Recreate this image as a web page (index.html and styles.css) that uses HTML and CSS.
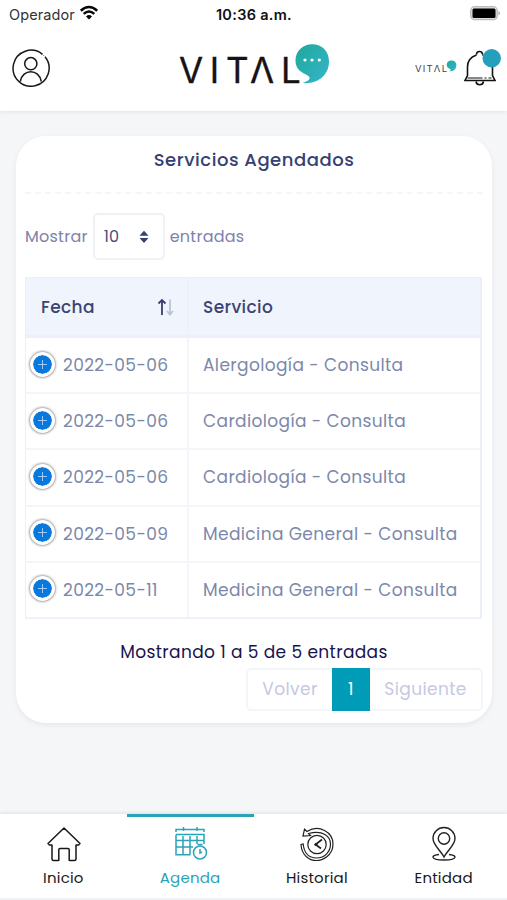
FILE: index.html
```html
<!DOCTYPE html>
<html lang="es">
<head>
<meta charset="utf-8">
<meta name="viewport" content="width=device-width, initial-scale=1">
<title>Servicios Agendados</title>
<link rel="stylesheet" href="styles.css">
</head>
<body>
<div class="app">
  <header class="top">
    <div class="status">
      <div class="carrier"><span class="operator">Operador</span>
        <svg width="20" height="16" viewBox="0 0 20 16" fill="none" stroke="#080808" stroke-width="2.6"><path d="M1.8 5.8Q10-1.8 18.2 5.8M4.7 8.9Q10 4.1 15.3 8.9"/><path d="M7 11.4Q10 8.8 13 11.4L10 14.4Z" fill="#080808" stroke="none"/></svg>
      </div>
      <span class="clock">10:36 a.m.</span>
      <svg class="battery" width="31" height="15" viewBox="0 0 31 15"><rect x=".7" y=".7" width="26.6" height="13" rx="4" fill="#ddd" stroke="#bbb" stroke-width="1.3"/><rect x="2.500" y="2.500" width="23" height="9.500" rx="1.500"/><path d="M28.5 5q3 2.200 0 4.500z" fill="#aaa"/></svg>
    </div>
    <div class="brandbar">
      <svg class="user" width="38" height="38" viewBox="0 0 38 38" fill="none" stroke="#181818" stroke-width="1.5"><path d="M30.5 5.3A18 18 0 1 0 33 7.8M31.5 6.2l.3.3"/><circle cx="18.800" cy="14.700" r="6.100"/><path d="M8.300 32.500C10.500 19.500 27 19.500 29.300 32.500"/></svg>
      <svg class="logo" width="152" height="54" viewBox="0 0 152 54">
        <defs><linearGradient id="teal" x1="0" y1="0" x2="1" y2="1"><stop offset="0" stop-color="#20a89a"/><stop offset="1" stop-color="#35b5cc"/></linearGradient></defs>
        <g class="logo-type"><text x="0" y="39.500">V</text><text x="30.700" y="39.500">I</text><text x="47" y="39.500">T</text><text x="71" y="39.500">Λ</text><text x="102" y="39.500">L</text></g>
        <path d="M133.300 1.300C123.500 1.300 116.500 8.500 116.500 17.500c0 7 4 11 9.500 13.500 7.500 3.200 5.500 6.500-2.500 9C139 41.500 150 32 150 18.500 150 8.500 143 1.300 133.300 1.300Z" fill="url(#teal)"/>
        <g fill="#fff"><circle cx="126" cy="17" r="1.600"/><circle cx="133" cy="17" r="1.600"/><circle cx="140.300" cy="17" r="1.600"/></g>
      </svg>
      <div class="tools">
        <svg width="42" height="16" viewBox="0 0 42 16"><text x="0" y="12" class="mini" textLength="32">VITΛL</text><path d="M36.500 .5c-3 0-4.800 1.900-4.800 4.300 0 2.200 1.600 3.500 3 4 1.600.6 1.300 1.700-.5 2.400 4.400.8 7.200-2.200 7.200-6.100 0-2.700-2-4.600-4.900-4.600Z" fill="url(#teal)"/></svg>
        <svg class="bell" width="38" height="37" viewBox="0 0 38 37" fill="none" stroke="#111" stroke-width="1.600"><path d="M13.500 5.500a3 3 0 0 1 6 0M13.500 6C7.500 8 4.500 12 4.500 18v8.500L2 31.500h30l-2.500-5V18C29.500 12 25.500 8 19.500 6"/><path d="M4.500 29h15m2 0h2m2 0h3" stroke-width="1"/><path d="M13 32.500a3.800 3.800 0 0 0 7.500 0"/><circle cx="28.700" cy="9.200" r="9.200" fill="#259fba" stroke="none"/></svg>
      </div>
    </div>
  </header>

  <main class="content">
    <section class="card">
      <h1>Servicios Agendados</h1>
      <div class="length"><span>Mostrar</span>
        <div class="select"><span>10</span><svg width="12" height="14" viewBox="0 0 10 14" fill="#36406f"><path d="M5 .8 9.500 5.800h-9zM.5 8h9L5 13z"/></svg></div>
        <span>entradas</span></div>
      <table>
        <thead><tr><th class="date"><div class="sort"><span>Fecha</span><svg width="18" height="18" viewBox="0 0 18 18" fill="none" stroke-width="1.800"><path d="M5 17V2M1.500 5.500 5 2l3.500 3.500" stroke="#36406f"/><path d="M13 1.500v15M10 13l3 3.500 3-3.500" stroke="#bdc2d2"/></svg></div></th><th>Servicio</th></tr></thead>
        <tbody>
          <tr><td class="when"><div><i class="plus"></i><span>2022-05-06</span></div></td><td>Alergología - Consulta</td></tr>
          <tr><td class="when"><div><i class="plus"></i><span>2022-05-06</span></div></td><td>Cardiología - Consulta</td></tr>
          <tr><td class="when"><div><i class="plus"></i><span>2022-05-06</span></div></td><td>Cardiología - Consulta</td></tr>
          <tr><td class="when"><div><i class="plus"></i><span>2022-05-09</span></div></td><td>Medicina General - Consulta</td></tr>
          <tr><td class="when"><div><i class="plus"></i><span>2022-05-11</span></div></td><td>Medicina General - Consulta</td></tr>
        </tbody>
      </table>
      <p class="info">Mostrando 1 a 5 de 5 entradas</p>
      <div class="pager"><span class="prev">Volver</span><span class="current">1</span><span class="next">Siguiente</span></div>
    </section>
  </main>

  <nav class="tabs">
    <a><svg width="36" height="36" viewBox="0 0 36 36" fill="none" stroke="#181818" stroke-width="1.500" stroke-linejoin="round"><path d="M18 2 2 17.500l1.500 1.500H6v14q0 1.500 1.500 1.500h5.300V23.700q0-1.200 1.200-1.200h8q1.200 0 1.200 1.200v10.800h5.300q1.500 0 1.500-1.500V19h2.500l1.500-1.500Z"/></svg><span>Inicio</span></a>
    <a class="active"><svg width="36" height="36" viewBox="0 0 36 36" fill="none" stroke="#2ba3b8" stroke-width="1.500"><path d="M3 6V3.500h28V6M10.500 1v4M24 1v4M3 8.500h28V18M3 8.500v20.300h14.500M3 14.500h28M3 21h17M10 10v18.500M17 10v18.500M24 10v8"/><circle cx="27" cy="26.500" r="6.500"/><path d="M27 23v4l2-1M24.500 18.500h5"/></svg><span>Agenda</span></a>
    <a><svg width="36" height="36" viewBox="0 0 36 36" fill="none" stroke="#222" stroke-width="1.200"><path d="M8 5.500C20-2 34 6 34 18S23 34.500 17.500 34.500C10 34.500 2.500 29 2 18.500l2.200-.5C5 27 10 32 17.500 32 26 32 31.500 25.500 31.500 18S24 3.500 9.500 7.500l2 2-7.500.7 1.500-7z"/><circle cx="18" cy="18.500" r="9.200"/><path d="m23 13.500-6.500 5 5.500 4" stroke-width="1.700"/><circle cx="17" cy="18.500" r="1" fill="#222"/></svg><span>Historial</span></a>
    <a><svg width="36" height="36" viewBox="0 0 36 36" fill="none" stroke="#222" stroke-width="1.400"><path d="M18 31C15 25 7 19 7 12.500a11 11 0 0 1 22 0C29 19 21 25 18 31Z"/><circle cx="18" cy="12.500" r="5.700"/><path d="M13 28.500c-4 .5-6 1.500-6 2.500 0 4 22 4 22 0 0-1-2-2-6-2.500"/></svg><span>Entidad</span></a>
  </nav>
</div>
</body>
</html>
```
FILE: styles.css
```css
* { box-sizing: border-box; }
body { margin: 0; background: #f5f6f8; font-family: Poppins, Inter, sans-serif; font-size: 17px; letter-spacing: .38px; color: #7c88aa; }
.app { height: 900px; display: flex; flex-direction: column; overflow: hidden; }
.top { height: 111px; background: #fff; box-shadow: 0 1px 4px #dfe2e6; }
.status { height: 28px; padding: 0 8px 0 9px; display: grid; grid-template-columns: 1fr auto 1fr; align-items: center; color: #111; font-family: Inter, sans-serif; }
.carrier { display: flex; align-items: center; gap: 4px; }
.carrier svg { margin-top: -3px; }
.operator { font-size: 14.500px; color: #333; letter-spacing: .1px; }
.clock { font-size: 14.500px; font-weight: 600; letter-spacing: .3px; }
.battery { justify-self: end; margin-right: -2px; margin-top: -2px; }
.brandbar { height: 83px; padding: 0 8px 0 12px; display: grid; grid-template-columns: 1fr 152px 1fr; align-items: center; letter-spacing: 0; }
.user { margin: -3px 0 0 0; }
.logo { margin: 1px 0 0 -.5px; }
.logo-type text { font-size: 35px; font-family: Inter, sans-serif; fill: #171213; stroke: #171213; stroke-width: .3; }
.tools { display: flex; justify-content: flex-end; align-items: center; gap: 6px; margin-top: -4px; }
.tools svg { flex: none; }
.mini { font: 9.500px Inter, sans-serif; fill: #444; }
.bell { margin-right: -2px; }
.content { flex: 1; padding: 25px 15px 0 16px; }
.card { height: 587px; background: #fff; border-radius: 30px; padding: 0 9px; box-shadow: 0 2px 5px #e5e7ea; }
h1 { margin: 0; height: 58px; padding-top: 11px; border-bottom: 2px dashed #f5f6f7; text-align: center; font-size: 18px; line-height: 25px; font-weight: 500; letter-spacing: .53px; color: #364071; }
.length { display: flex; align-items: center; height: 83px; padding-top: 2px; gap: 5px; font-size: 16px; letter-spacing: .25px; color: #7d82aa; }
.select { width: 72px; height: 47px; border: 2px solid #f0f1f5; border-radius: 5px; display: flex; align-items: center; justify-content: space-between; padding: 0 13px 0 9px; color: #49517d; }
table { width: 457px; border-collapse: separate; border-spacing: 0; table-layout: fixed; border: 1px solid #eaeff9; border-right-width: 2px; }
th, td { text-align: left; white-space: nowrap; padding: 0 0 0 14px; }
th { height: 60px; background: #f0f4fc; color: #3c4370; font-weight: 500; font-size: 17px; border-bottom: 3px solid #edf0f8; }
th.date { width: 163px; padding-left: 15px; border-right: 2px solid #edf1f8; }
td { height: 56.200px; border-bottom: 2px solid #f3f5fa; }
tr:last-child td { height: 55px; border-bottom-width: 1px; }
td.when { padding-left: 4px; border-right: 2px solid #f3f5fa; }
.sort { display: flex; justify-content: space-between; align-items: center; padding-right: 12px; }
.when div { display: flex; align-items: center; gap: 8px; }
.plus { width: 25px; height: 25px; margin-top: -2px; border-radius: 50%; border: 3.500px solid #fff; box-shadow: 0 0 3px #444; background: linear-gradient(#9dccff, #9dccff) 50% 50% / 9px 1px no-repeat, linear-gradient(#9dccff, #9dccff) 50% 50% / 1px 9px no-repeat, #0878dc; background-clip: padding-box; }
.info { margin: 20px 0 2px; height: 27px; line-height: 27px; text-align: center; color: #171451; font-size: 17px; }
.pager { display: flex; justify-content: flex-end; height: 43px; color: #c5c8e4; }
.pager span { display: flex; align-items: center; justify-content: center; border: 2px solid #f4f5f9; }
.pager .prev { width: 86px; border-radius: 5px 0 0 5px; border-right: 0; }
.pager .current { width: 38px; border: 0; background: #009cb7; color: #fff; }
.pager .next { width: 113px; border-radius: 0 5px 5px 0; border-left: 0; }
.tabs { height: 86px; background: #fff; display: grid; grid-template-columns: repeat(4, 1fr); box-shadow: 0 -1px 3px #dde0e3; border-bottom: 2px solid #f1f2f4; letter-spacing: .2px; }
.tabs a { border-top: 3px solid transparent; display: flex; flex-direction: column; align-items: center; padding-top: 9px; font-size: 15px; color: #191919; }
.tabs a svg { margin-left: 1px; }
.tabs a span { line-height: 24px; margin-top: 4px; }
.tabs .active { border-top-color: #2aa3b8; color: #2aa3b8; }
```
